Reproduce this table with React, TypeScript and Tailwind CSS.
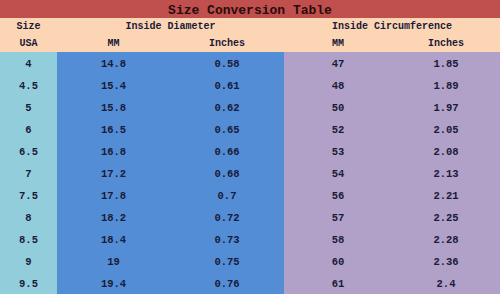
const rows = [
  ['4', '14.8', '0.58', '47', '1.85'],
  ['4.5', '15.4', '0.61', '48', '1.89'],
  ['5', '15.8', '0.62', '50', '1.97'],
  ['6', '16.5', '0.65', '52', '2.05'],
  ['6.5', '16.8', '0.66', '53', '2.08'],
  ['7', '17.2', '0.68', '54', '2.13'],
  ['7.5', '17.8', '0.7', '56', '2.21'],
  ['8', '18.2', '0.72', '57', '2.25'],
  ['8.5', '18.4', '0.73', '58', '2.28'],
  ['9', '19', '0.75', '60', '2.36'],
  ['9.5', '19.4', '0.76', '61', '2.4'],
];

export default function App() {
  return (
    <div
      className="w-[500px] h-[294px] overflow-hidden bg-white text-[#1a1a3a] font-bold"
      style={{ fontFamily: '"Liberation Mono", monospace' }}
    >
      {/* Title */}
      <div className="h-[18px] pt-[2px] bg-[#c0504d] flex items-center justify-center text-[13px] text-[#2a0c0c] leading-none">
        Size Conversion Table
      </div>

      {/* Header */}
      <div className="grid grid-cols-[57px_113px_114px_108px_108px] grid-rows-[17px_17px] bg-[#fcd5b4] text-[10px] leading-none">
        <div className="flex items-center justify-center">Size</div>
        <div className="col-span-2 flex items-center justify-center">Inside Diameter</div>
        <div className="col-span-2 flex items-center justify-center">Inside Circumference</div>
        <div className="flex items-center justify-center">USA</div>
        <div className="flex items-center justify-center">MM</div>
        <div className="flex items-center justify-center">Inches</div>
        <div className="flex items-center justify-center">MM</div>
        <div className="flex items-center justify-center">Inches</div>
      </div>

      {/* Body */}
      <div className="grid grid-cols-[57px_113px_114px_108px_108px] auto-rows-[22px] text-[10.5px] leading-none">
        {rows.map((r) => (
          <div key={r[0]} className="contents">
            <div className="bg-[#92cddc] pt-[3px] flex items-center justify-center">{r[0]}</div>
            <div className="bg-[#538dd5] pt-[3px] flex items-center justify-center">{r[1]}</div>
            <div className="bg-[#538dd5] pt-[3px] flex items-center justify-center">{r[2]}</div>
            <div className="bg-[#b1a0c7] pt-[3px] flex items-center justify-center">{r[3]}</div>
            <div className="bg-[#b1a0c7] pt-[3px] flex items-center justify-center">{r[4]}</div>
          </div>
        ))}
      </div>
    </div>
  );
}
